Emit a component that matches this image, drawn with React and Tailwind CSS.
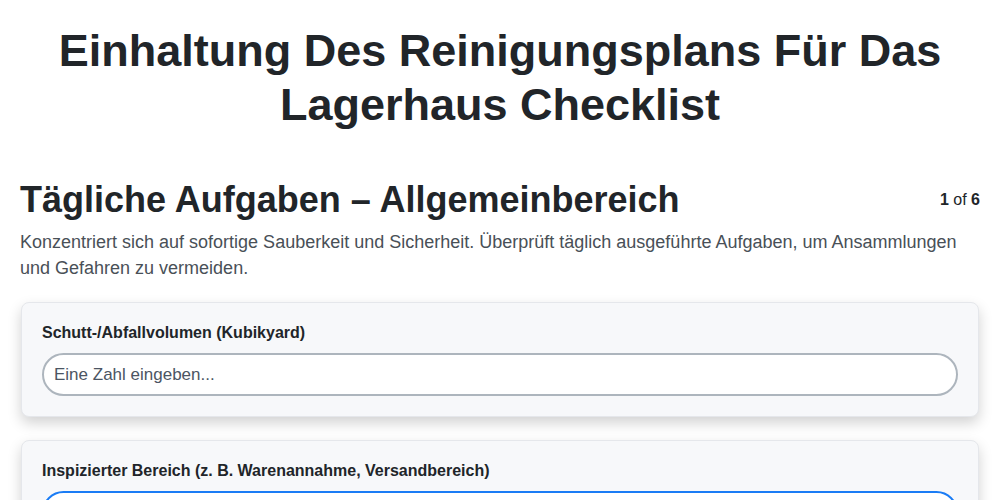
import React from 'react';

const fields = [
  { label: 'Schutt-/Abfallvolumen (Kubikyard)', placeholder: 'Eine Zahl eingeben...', focused: false },
  { label: 'Inspizierter Bereich (z. B. Warenannahme, Versandbereich)', placeholder: 'Text eingeben...', focused: true },
];

export default function App() {
  return (
    <div className="min-h-screen bg-white text-[#212529] font-['Liberation_Sans',Arial,sans-serif]">
      <div className="px-5">
        <h1 className="pt-6 text-center text-[45px] leading-[54px] font-bold">
          Einhaltung Des Reinigungsplans Für Das Lagerhaus Checklist
        </h1>

        <div className="mt-[46px]">
          <div className="flex items-start justify-between">
            <h2 className="text-[36px] leading-[43px] font-bold">Tägliche Aufgaben – Allgemeinbereich</h2>
            <div className="text-base leading-[24px] mt-[10px]">
              <span className="font-bold">1</span> of <span className="font-bold">6</span>
            </div>
          </div>
          <p className="mt-2 text-[18px] leading-[26px] text-[#495057]">
            Konzentriert sich auf sofortige Sauberkeit und Sicherheit. Überprüft täglich ausgeführte Aufgaben, um Ansammlungen und Gefahren zu vermeiden.
          </p>
        </div>

        <div className="mt-[21px] flex flex-col gap-[23px]">
          {fields.map((f) => (
            <div
              key={f.label}
              className="mx-px bg-[#f7f8fa] border border-[#e5e7eb] rounded-lg px-5 pt-[18px] pb-5 shadow-[0_6px_14px_rgba(0,0,0,0.18)]"
            >
              <label className="block text-base leading-[24px] font-bold mb-2">{f.label}</label>
              <input
                type="text"
                placeholder={f.placeholder}
                className={
                  'w-full bg-white rounded-full border-2 px-[10px] py-[8px] text-[17px] leading-[23px] text-[#212529] placeholder:text-[#4b5563] focus:outline-none ' +
                  (f.focused ? 'border-[#1a7cf5]' : 'border-[#adb5bd]')
                }
              />
            </div>
          ))}
        </div>
      </div>
    </div>
  );
}
